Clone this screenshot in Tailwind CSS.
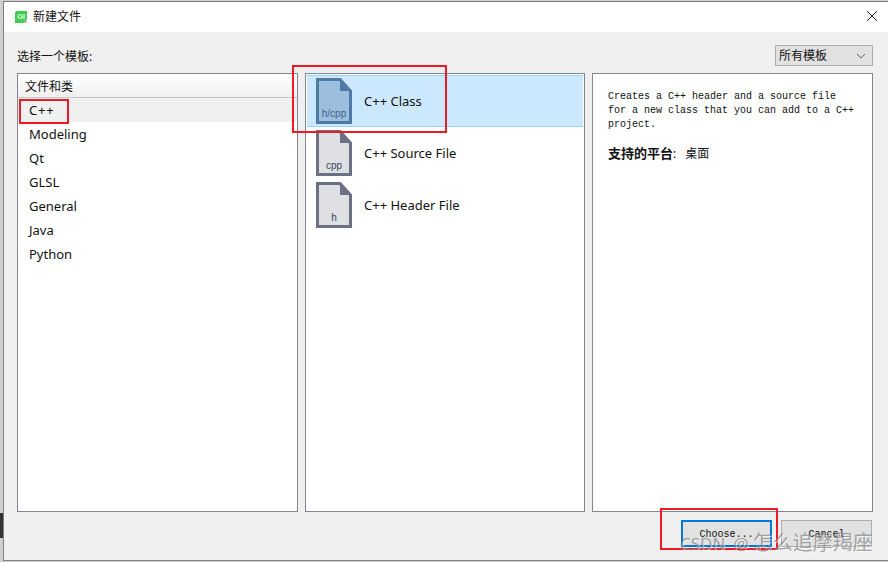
<!DOCTYPE html>
<html lang="zh">
<head>
  <meta charset="utf-8">
  <title>新建文件</title>
  <script src="https://cdn.jsdelivr.net/npm/@tailwindcss/browser@4"></script>
</head>
<body class="relative w-[888px] h-[562px] overflow-hidden bg-[#d0d0d0] font-['Noto_Sans','Noto_Sans_CJK_SC',sans-serif] text-[#111]">
  <!-- window behind the dialog -->
  <div class="absolute left-0 top-[513px] w-[4px] h-[25px] bg-[#333]"></div>

  <!-- dialog -->
  <div class="absolute left-[3px] top-[1px] w-[885px] h-[560px] border-l border-t border-b border-[#7f7f7f] flex flex-col bg-[#f0f0f0]">
    <!-- title bar -->
    <div class="h-[30px] shrink-0 bg-white flex items-center pl-[10px] pr-[9px]">
      <svg width="14" height="14" viewBox="0 0 14 14" class="shrink-0">
        <path d="M2 1H13V9L10 13H1V3Z" fill="#41cd52"/>
        <path d="M9 13L13 9V12L12 13Z" fill="#b9b9b9"/>
        <circle cx="6" cy="6.500" r="2" fill="none" stroke="#e8f8ea" stroke-width="1.200"/>
        <path d="M10 4V9" stroke="#e8f8ea" stroke-width="1.200"/>
      </svg>
      <span class="ml-[5px] text-[12px] leading-[16px]">新建文件</span>
      <svg width="12" height="12" viewBox="0 0 12 12" class="ml-auto mr-[1px] mt-[-2px]">
        <path d="M1 1L11 11M11 1L1 11" stroke="#222" stroke-width="1" fill="none"/>
      </svg>
    </div>

    <div class="flex-1 flex flex-col pl-[13px] pr-[15px]">
      <!-- template filter row -->
      <div class="h-[41px] shrink-0 flex items-start justify-between pt-[13px]">
        <span class="text-[12px] leading-[20px] mt-[2px]">选择一个模板:</span>
        <div class="w-[98px] h-[21px] border border-[#adadad] bg-[#e1e1e1] flex items-center justify-between pl-[3px] pr-[6px] text-[12px]">
          <span class="mt-[1px]">所有模板</span>
          <svg width="10" height="6" viewBox="0 0 10 6"><path d="M1 1L5 5L9 1" stroke="#666" fill="none"/></svg>
        </div>
      </div>

      <!-- three panes -->
      <div class="h-[439px] shrink-0 flex gap-[7px]">
        <div class="w-[281px] border border-[#828790] bg-white flex flex-col">
          <div class="h-[24px] border-b border-[#c8c8c8] bg-gradient-to-b from-white to-[#f0f0f0] pl-[7px] text-[12px] leading-[26px]">文件和类</div>
          <div class="h-[24px] bg-[#f0f0f0] pl-[11px] text-[13px] leading-[24px] tracking-[0.8px]">C++</div>
          <div class="h-[24px] pl-[11px] text-[13px] leading-[24px]">Modeling</div>
          <div class="h-[24px] pl-[11px] text-[13px] leading-[24px]">Qt</div>
          <div class="h-[24px] pl-[11px] text-[13px] leading-[24px]">GLSL</div>
          <div class="h-[24px] pl-[11px] text-[13px] leading-[24px]">General</div>
          <div class="h-[24px] pl-[11px] text-[13px] leading-[24px]">Java</div>
          <div class="h-[24px] pl-[11px] text-[13px] leading-[24px]">Python</div>
        </div>

        <div class="w-[280px] border border-[#828790] bg-white flex flex-col pt-[1px] pl-[1px] pr-[1px]">
          <div class="h-[52px] bg-[#cce8ff] border-t border-b border-[#99d1ff] flex items-center pl-[9px] text-[13px]">
            <svg width="36" height="46" viewBox="0 0 36 46" class="shrink-0">
              <path d="M1.500 1.500H24L34.500 13V44.500H1.500Z" fill="#9dbfdf" stroke="#4e7aa3" stroke-width="3"/>
              <path d="M24 0L36 13H24Z" fill="#4e7aa3"/>
              <text x="18" y="39" text-anchor="middle" font-size="10" font-family="Liberation Sans" fill="#3f5f80">h/cpp</text>
            </svg>
            <span class="ml-[12px] mt-[2px]">C++ Class</span>
          </div>
          <div class="h-[52px] flex items-center pl-[9px] text-[13px]">
            <svg width="36" height="46" viewBox="0 0 36 46" class="shrink-0">
              <path d="M1.500 1.500H24L34.500 13V44.500H1.500Z" fill="#dfe0e4" stroke="#6b7085" stroke-width="3"/>
              <path d="M24 0L36 13H24Z" fill="#6b7085"/>
              <text x="18" y="39" text-anchor="middle" font-size="10" font-family="Liberation Sans" fill="#3a4560">cpp</text>
            </svg>
            <span class="ml-[12px] mt-[2px]">C++ Source File</span>
          </div>
          <div class="h-[52px] flex items-center pl-[9px] text-[13px]">
            <svg width="36" height="46" viewBox="0 0 36 46" class="shrink-0">
              <path d="M1.500 1.500H24L34.500 13V44.500H1.500Z" fill="#dfe0e4" stroke="#6b7085" stroke-width="3"/>
              <path d="M24 0L36 13H24Z" fill="#6b7085"/>
              <text x="18" y="39" text-anchor="middle" font-size="10" font-family="Liberation Sans" fill="#3a4560">h</text>
            </svg>
            <span class="ml-[12px] mt-[2px]">C++ Header File</span>
          </div>
        </div>

        <div class="w-[281px] border border-[#828790] bg-white pl-[15px] pr-[10px] pt-[16px] text-[12px]">
          <p class="font-['Liberation_Mono',monospace] text-[10px] leading-[14px]">Creates a C++ header and a source file<br>for a new class that you can add to a C++<br>project.</p>
          <p class="mt-[13px] leading-[16px]"><span class="font-bold text-[13px]">支持的平台</span>:<span class="ml-[9px]">桌面</span></p>
        </div>
      </div>

      <!-- buttons -->
      <div class="flex-1 flex justify-end gap-[9px] pt-[8px] pr-[1px]">
        <div class="w-[91px] h-[27px] bg-[#e1e1e1] border-2 border-[#0078d7] flex items-center justify-center font-['Liberation_Mono',monospace] text-[10px] pt-[1px]">Choose...</div>
        <div class="w-[91px] h-[27px] bg-[#e1e1e1] border border-[#adadad] flex items-center justify-center font-['Liberation_Mono',monospace] text-[10px] pt-[1px]">Cancel</div>
      </div>
    </div>
  </div>

  <!-- red annotation boxes -->
  <div class="absolute left-[19px] top-[99px] w-[50px] h-[25px] border-[2px] border-[#ed1c24]"></div>
  <div class="absolute left-[292px] top-[65px] w-[155px] h-[68px] border-[2px] border-[#ed1c24]"></div>
  <div class="absolute left-[660px] top-[508px] w-[118px] h-[42px] border-[2px] border-[#ed1c24]"></div>

  <!-- watermark -->
  <div class="absolute left-[680px] top-[532px] leading-[22px] text-[#808080]/70 whitespace-nowrap [text-shadow:1px_1px_0_#ffffff80]"><span class="text-[17px]">CSDN</span><span class="text-[17px] ml-[8px]">@</span><span class="text-[20px] ml-[4px]">怎么追摩羯座</span></div>
</body>
</html>
